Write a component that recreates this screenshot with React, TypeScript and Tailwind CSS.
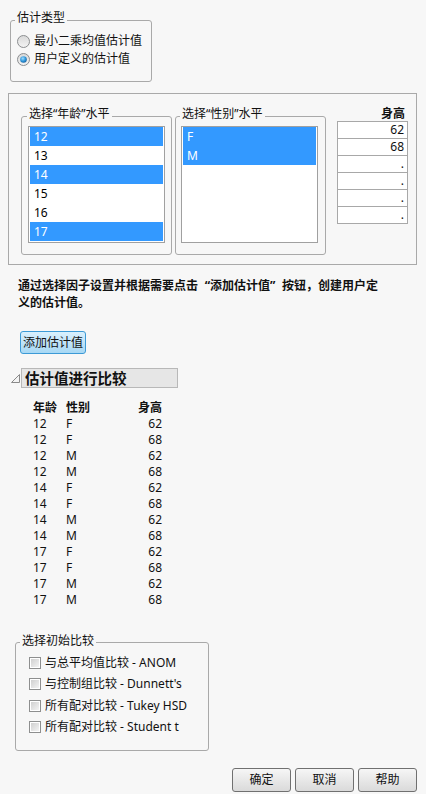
import React from "react";

function Radio({ checked }: { checked?: boolean }) {
  return (
    <svg width="13" height="13" viewBox="0 0 13 13" className="shrink-0">
      <defs>
        <linearGradient id={checked ? "rg1" : "rg0"} x1="0" y1="0" x2="0" y2="1">
          <stop offset="0" stopColor="#d8d8d8" />
          <stop offset="1" stopColor="#f4f4f4" />
        </linearGradient>
        <radialGradient id="blueDot" cx="0.4" cy="0.35" r="0.7">
          <stop offset="0" stopColor="#9fdcff" />
          <stop offset="0.6" stopColor="#2a93d8" />
          <stop offset="1" stopColor="#1b5f9a" />
        </radialGradient>
      </defs>
      <circle cx="6.5" cy="6.5" r="6" fill={`url(#${checked ? "rg1" : "rg0"})`} stroke="#8c8e90" strokeWidth="1" />
      {checked && <circle cx="6.5" cy="6.5" r="3.3" fill="url(#blueDot)" />}
    </svg>
  );
}

function Check() {
  return (
    <div className="w-[12px] h-[12px] shrink-0 border border-[#8e8f8f] bg-white p-[1px]">
      <div className="w-full h-full bg-gradient-to-br from-[#d0d0d0] to-[#f3f3f3]" />
    </div>
  );
}

function ListBox({ items, selected }: { items: string[]; selected: string[] }) {
  return (
    <div className="w-[137px] h-[117px] border border-[#a0a0a0] bg-white px-[1px]">
      {items.map((it) => {
        const sel = selected.includes(it);
        return (
          <div
            key={it}
            className={
              sel
                ? "h-[19px] leading-[19px] pl-[4px] bg-[#3399ff] text-white"
                : "h-[19px] leading-[19px] pl-[4px] text-black"
            }
          >
            {it}
          </div>
        );
      })}
    </div>
  );
}

const rows: [string, string, string][] = [
  ["12", "F", "62"],
  ["12", "F", "68"],
  ["12", "M", "62"],
  ["12", "M", "68"],
  ["14", "F", "62"],
  ["14", "F", "68"],
  ["14", "M", "62"],
  ["14", "M", "68"],
  ["17", "F", "62"],
  ["17", "F", "68"],
  ["17", "M", "62"],
  ["17", "M", "68"],
];

const checks = [
  "与总平均值比较 - ANOM",
  "与控制组比较 - Dunnett's",
  "所有配对比较 - Tukey HSD",
  "所有配对比较 - Student t",
];

export default function App() {
  return (
    <div className="w-[426px] h-[794px] overflow-hidden bg-[#f7f7f7] text-[12px] leading-[14px] text-[#111] font-['Noto_Sans','Noto_Sans_CJK_SC',sans-serif] flex flex-col">
      {/* 估计类型 */}
      <div className="relative ml-[10px] mt-[20px] w-[142px] h-[62px] border border-[#a9a9a9] rounded-[3px] pt-[11px] pl-[6px]">
        <span className="absolute left-[4px] top-[-10px] px-[2px] bg-[#f7f7f7] leading-[14px]">估计类型</span>
        <div className="h-[18px] flex items-center gap-[4px]">
          <Radio />
          <span>最小二乘均值估计值</span>
        </div>
        <div className="h-[18px] flex items-center gap-[4px]">
          <Radio checked />
          <span>用户定义的估计值</span>
        </div>
      </div>

      {/* big box */}
      <div className="mt-[11px] ml-[8px] w-[409px] h-[172px] shrink-0 border border-[#a9a9a9] flex items-start pl-[12px]">
        <div className="relative mt-[22px] w-[151px] h-[139px] border border-[#a9a9a9] rounded-[3px] pt-[9px] pl-[6px]">
          <span className="absolute left-[5px] top-[-10px] px-[2px] bg-[#f7f7f7] leading-[14px]">选择“年龄”水平</span>
          <ListBox items={["12", "13", "14", "15", "16", "17"]} selected={["12", "14", "17"]} />
        </div>
        <div className="relative ml-[3px] mt-[22px] w-[151px] h-[139px] border border-[#a9a9a9] rounded-[3px] pt-[9px] pl-[5px]">
          <span className="absolute left-[4px] top-[-10px] px-[2px] bg-[#f7f7f7] leading-[14px]">选择“性别”水平</span>
          <ListBox items={["F", "M"]} selected={["F", "M"]} />
        </div>
        <div className="ml-[11px] mt-[12px] w-[71px] flex flex-col">
          <div className="h-[15px] leading-[15px] text-right pr-[3px] font-bold">身高</div>
          <div className="border-t border-l border-r border-[#a8a8a8] bg-white">
            {["62", "68", ".", ".", ".", "."].map((v, i) => (
              <div key={i} className="h-[17px] leading-[16px] border-b border-[#a8a8a8] text-right pr-[3px]">
                {v}
              </div>
            ))}
          </div>
        </div>
      </div>

      {/* instruction */}
      <div className="mt-[12px] ml-[18px] font-bold leading-[17px]">
        通过选择因子设置并根据需要点击
        <span className="inline-block w-[12px] text-right">“</span>
        添加估计值
        <span className="inline-block w-[12px] text-left">”</span>
        按钮
        <span className="inline-block w-[12px] text-center">，</span>
        创建用户定
        <br />
        义的估计值。
      </div>

      {/* add button */}
      <div className="mt-[20px] ml-[20px] w-[66px] h-[23px] shrink-0 rounded-[3px] border border-[#3c9ad6] bg-gradient-to-b from-[#d9f0fd] to-[#a7d8f4] flex items-center justify-center">
        添加估计值
      </div>

      {/* outline header */}
      <div className="mt-[14px] ml-[10px] flex items-center shrink-0">
        <svg width="11" height="11" viewBox="0 0 11 11" className="shrink-0">
          <polygon points="1.5,9.5 9.5,1.5 9.5,9.5" fill="#f4f4f4" stroke="#8a8a8a" strokeWidth="1" />
        </svg>
        <div className="w-[157px] h-[20px] border border-[#b8b8b8] bg-[#e6e6e6] pl-[3px] font-bold text-[14.5px] leading-[18px]">
          估计值进行比较
        </div>
      </div>

      {/* table */}
      <div className="mt-[12px] ml-[33px] grid grid-cols-[33px_33px_63px] shrink-0">
        <div className="h-[16px] leading-[16px] font-bold">年龄</div>
        <div className="h-[16px] leading-[16px] font-bold">性别</div>
        <div className="h-[16px] leading-[16px] font-bold text-right">身高</div>
        {rows.map((r, i) => (
          <React.Fragment key={i}>
            <div className="h-[16px] leading-[16px]">{r[0]}</div>
            <div className="h-[16px] leading-[16px]">{r[1]}</div>
            <div className="h-[16px] leading-[16px] text-right">{r[2]}</div>
          </React.Fragment>
        ))}
      </div>

      {/* 选择初始比较 */}
      <div className="relative mt-[34px] ml-[15px] w-[194px] h-[109px] shrink-0 border border-[#a9a9a9] rounded-[3px] pt-[9px] pl-[13px]">
        <span className="absolute left-[4px] top-[-9px] px-[2px] bg-[#f7f7f7] leading-[14px]">选择初始比较</span>
        {checks.map((c) => (
          <div key={c} className="h-[21.5px] flex items-center gap-[4px]">
            <Check />
            <span>{c}</span>
          </div>
        ))}
      </div>

      {/* buttons */}
      <div className="mt-[17px] flex justify-end gap-[4px] pr-[9px] shrink-0">
        {["确定", "取消", "帮助"].map((b) => (
          <div
            key={b}
            className="w-[59px] h-[24px] rounded-[3px] border border-[#707070] bg-gradient-to-b from-[#f6f6f6] to-[#dadada] flex items-center justify-center"
          >
            {b}
          </div>
        ))}
      </div>
    </div>
  );
}
